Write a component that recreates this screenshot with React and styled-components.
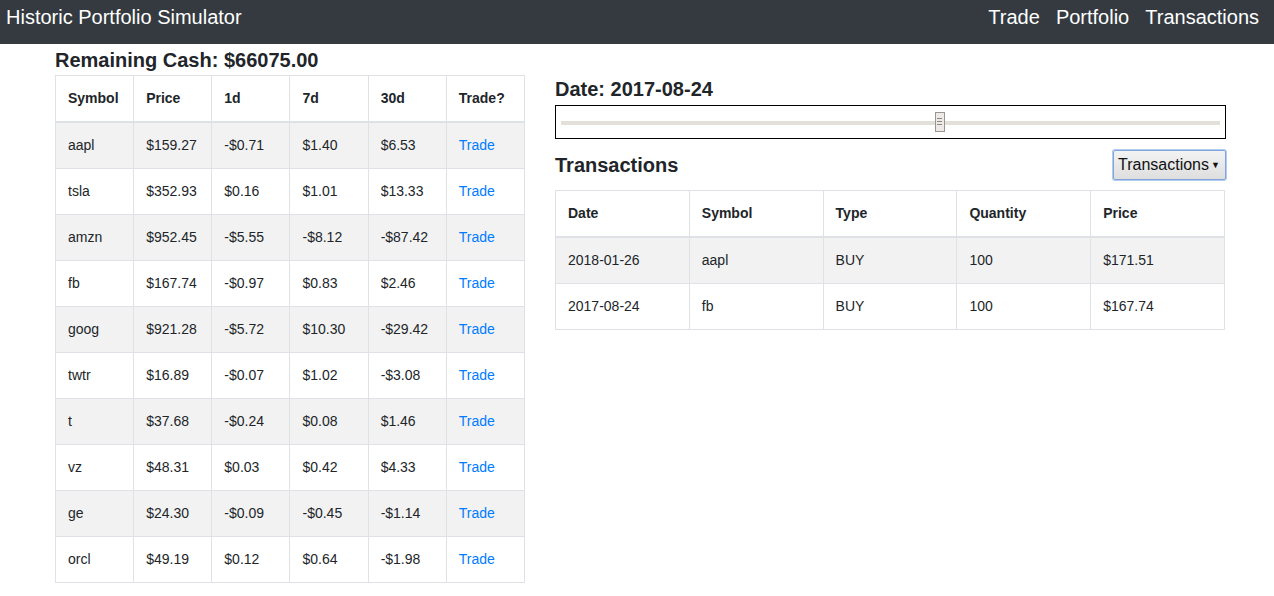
import React from "react";
import styled, { createGlobalStyle } from "styled-components";

const stocks = [
  ["aapl", "$159.27", "-$0.71", "$1.40", "$6.53"],
  ["tsla", "$352.93", "$0.16", "$1.01", "$13.33"],
  ["amzn", "$952.45", "-$5.55", "-$8.12", "-$87.42"],
  ["fb", "$167.74", "-$0.97", "$0.83", "$2.46"],
  ["goog", "$921.28", "-$5.72", "$10.30", "-$29.42"],
  ["twtr", "$16.89", "-$0.07", "$1.02", "-$3.08"],
  ["t", "$37.68", "-$0.24", "$0.08", "$1.46"],
  ["vz", "$48.31", "$0.03", "$0.42", "$4.33"],
  ["ge", "$24.30", "-$0.09", "-$0.45", "-$1.14"],
  ["orcl", "$49.19", "$0.12", "$0.64", "-$1.98"],
];

const transactions = [
  ["2018-01-26", "aapl", "BUY", "100", "$171.51"],
  ["2017-08-24", "fb", "BUY", "100", "$167.74"],
];

const GlobalStyle = createGlobalStyle`
  body {
    margin: 0;
    font-family: "Liberation Sans", Arial, sans-serif;
    color: #212529;
    background: #fff;
  }
`;

const Navbar = styled.nav`
  height: 44px;
  background: #343a40;
  display: flex;
  align-items: center;
  justify-content: space-between;
  padding: 0 15px 9px 6px;
  box-sizing: border-box;
`;

const Brand = styled.div`
  color: #fff;
  font-size: 20px;
`;

const NavLinks = styled.div`
  display: flex;
  gap: 16px;
  a {
    color: #fff;
    font-size: 20px;
    text-decoration: none;
  }
`;

const Main = styled.main`
  display: flex;
  gap: 30px;
  padding-left: 55px;
  align-items: flex-start;
`;

const LeftCol = styled.section`
  width: 470px;
`;

const RightCol = styled.section`
  width: 671px;
  padding-top: 30px;
`;

const Heading = styled.h2`
  margin: 0;
  font-size: 20px;
  font-weight: 700;
  line-height: 1.5;
  height: ${(p) => p.h || 30}px;
  display: flex;
  align-items: center;
`;

const Table = styled.table`
  border-collapse: collapse;
  width: ${(p) => p.w}px;
  font-size: 14px;
  line-height: 21px;
  table-layout: fixed;
  th,
  td {
    border: 1px solid #dee2e6;
    padding: 12px;
    text-align: left;
    vertical-align: top;
  }
  th {
    font-weight: 700;
    border-bottom: 2px solid #dee2e6;
  }
  tbody tr:nth-child(odd) {
    background: #f2f2f2;
  }
  a {
    color: #007bff;
    text-decoration: none;
  }
`;

const SliderBox = styled.div`
  position: relative;
  height: 34px;
  border: 1px solid #000;
  box-sizing: border-box;
  margin-top: 1px;
  padding: 0 5px;
  display: flex;
  align-items: center;
`;

const Track = styled.div`
  position: relative;
  flex: 1;
  height: 4px;
  background: #e3e0da;
  margin-top: 1px;
`;

const Handle = styled.div`
  position: absolute;
  top: -9px;
  width: 10px;
  height: 20px;
  margin-left: -5px;
  box-sizing: border-box;
  border: 1px solid #9a9590;
  background: #ece9e6;
  display: flex;
  flex-direction: column;
  justify-content: center;
  align-items: center;
  gap: 2px;
  span {
    width: 5px;
    height: 1px;
    background: #8c8884;
  }
`;

const SectionHeader = styled.div`
  display: flex;
  justify-content: space-between;
  align-items: center;
  margin-top: 10px;
  margin-bottom: 9px;
  height: 32px;
`;

const DropButton = styled.button`
  font-family: "Liberation Sans", Arial, sans-serif;
  font-size: 16px;
  color: #111;
  height: 30px;
  width: 113px;
  padding: 0 5px 0 4px;
  border: 1px solid #7ea6dd;
  border-radius: 2px;
  box-shadow: 0 0 0 1px #b4cbee;
  background: linear-gradient(#f3f3f3, #dedede);
  display: flex;
  align-items: center;
  justify-content: space-between;
  small {
    font-size: 9px;
  }
`;

export default function App() {
  const pos = 57.5;
  return (
    <>
      <GlobalStyle />
      <Navbar>
        <Brand>Historic Portfolio Simulator</Brand>
        <NavLinks>
          <a href="#trade">Trade</a>
          <a href="#portfolio">Portfolio</a>
          <a href="#transactions">Transactions</a>
        </NavLinks>
      </Navbar>
      <Main>
        <LeftCol>
          <Heading h={31}>Remaining Cash: $66075.00</Heading>
          <Table w={470}>
            <thead>
              <tr>
                <th>Symbol</th>
                <th>Price</th>
                <th>1d</th>
                <th>7d</th>
                <th>30d</th>
                <th>Trade?</th>
              </tr>
            </thead>
            <tbody>
              {stocks.map((s) => (
                <tr key={s[0]}>
                  {s.map((v, i) => (
                    <td key={i}>{v}</td>
                  ))}
                  <td>
                    <a href="#trade">Trade</a>
                  </td>
                </tr>
              ))}
            </tbody>
          </Table>
        </LeftCol>
        <RightCol>
          <Heading>Date: 2017-08-24</Heading>
          <SliderBox>
            <Track>
              <Handle style={{ left: `${pos}%` }}>
                <span />
                <span />
                <span />
              </Handle>
            </Track>
          </SliderBox>
          <SectionHeader>
            <Heading>Transactions</Heading>
            <DropButton>
              Transactions <small>▼</small>
            </DropButton>
          </SectionHeader>
          <Table w={670}>
            <thead>
              <tr>
                <th>Date</th>
                <th>Symbol</th>
                <th>Type</th>
                <th>Quantity</th>
                <th>Price</th>
              </tr>
            </thead>
            <tbody>
              {transactions.map((t) => (
                <tr key={t[0]}>
                  {t.map((v, i) => (
                    <td key={i}>{v}</td>
                  ))}
                </tr>
              ))}
            </tbody>
          </Table>
        </RightCol>
      </Main>
    </>
  );
}
